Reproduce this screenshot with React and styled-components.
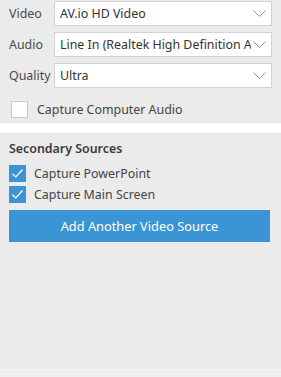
import styled, { createGlobalStyle } from 'styled-components';

const GlobalStyle = createGlobalStyle`
    html, body {
        margin: 0;
        padding: 0;
        background: #ebebeb;
    }
    body {
        font-family: "Noto Sans", "Open Sans", sans-serif;
        color: #444;
    }
`;

const Page = styled.div`
    width: 281px;
    height: 377px;
    display: flex;
    flex-direction: column;
    background: #ebebeb;
`;

const TopPanel = styled.div`
    padding: 1px 9px 0 9px;
    height: 123px;
    box-sizing: border-box;
    display: flex;
    flex-direction: column;
    gap: 6px;
`;

const Divider = styled.div`
    height: 10px;
    background: #ffffff;
`;

const Row = styled.div`
    display: flex;
    align-items: center;
`;

const Label = styled.div`
    width: 45px;
    font-size: 12.4px;
    color: #4a4a4a;
`;

const Select = styled.div`
    flex: 1;
    min-width: 0;
    height: 25px;
    box-sizing: border-box;
    background: #fff;
    border: 1px solid #d2d2d2;
    display: flex;
    align-items: center;
    padding: 0 0 0 5px;
    font-size: 12.4px;
    color: #333;
`;

const SelectText = styled.span`
    flex: 1;
    min-width: 0;
    white-space: nowrap;
    overflow: hidden;
`;

const Chevron = styled.svg`
    width: 13px;
    height: 7px;
    margin: 0 5px 0 2px;
    flex-shrink: 0;
`;

const CheckRow = styled.label`
    display: flex;
    align-items: center;
    gap: ${p => p.$gap || 8}px;
    font-size: 12.4px;
    color: #444;
    margin-top: ${p => p.$top || 0}px;
    padding-left: ${p => p.$indent || 0}px;
`;

const Box = styled.span`
    width: 17px;
    height: 17px;
    box-sizing: border-box;
    display: flex;
    align-items: center;
    justify-content: center;
    background: ${p => (p.$checked ? '#3b94d4' : '#fff')};
    border: 1px solid ${p => (p.$checked ? '#3b94d4' : '#c8c8c8')};
`;

const BottomPanel = styled.div`
    flex: 1;
    padding: 7px 11px 0 9px;
    display: flex;
    flex-direction: column;
`;

const Heading = styled.div`
    font-size: 12.4px;
    font-weight: 600;
    color: #3a3a3a;
`;

const CheckList = styled.div`
    display: flex;
    flex-direction: column;
    gap: 4px;
    margin-top: 8px;
`;

const Button = styled.button`
    margin-top: 7px;
    height: 32px;
    border: none;
    background: #3b94d4;
    color: #fff;
    font-family: inherit;
    font-size: 12.8px;
    cursor: pointer;
`;

const Footer = styled.div`
    height: 7px;
    background: #f0f0f0;
    border-top: 1px solid #f4f4f4;
`;

function Check({ checked }) {
    return (
        <Box $checked={checked}>
            {checked && (
                <svg width="13" height="11" viewBox="0 0 13 11">
                    <path d="M1.5 5.8 L4.8 9 L11.5 1.5" fill="none" stroke="#fff" strokeWidth="1.2" />
                </svg>
            )}
        </Box>
    );
}

function Dropdown({ label, value }) {
    return (
        <Row>
            <Label>{label}</Label>
            <Select>
                <SelectText>{value}</SelectText>
                <Chevron viewBox="0 0 13 7">
                    <path d="M0.5 0.5 L6.5 6.5 L12.5 0.5" fill="none" stroke="#999" strokeWidth="1" />
                </Chevron>
            </Select>
        </Row>
    );
}

export default function App() {
    return (
        <Page>
            <GlobalStyle />
            <TopPanel>
                <Dropdown label="Video" value="AV.io HD Video" />
                <Dropdown label="Audio" value="Line In (Realtek High Definition Audio)" />
                <Dropdown label="Quality" value="Ultra" />
                <CheckRow $top={7} $indent={2} $gap={9}>
                    <Check checked={false} />
                    Capture Computer Audio
                </CheckRow>
            </TopPanel>
            <Divider />
            <BottomPanel>
                <Heading>Secondary Sources</Heading>
                <CheckList>
                    <CheckRow>
                        <Check checked />
                        Capture PowerPoint
                    </CheckRow>
                    <CheckRow>
                        <Check checked />
                        Capture Main Screen
                    </CheckRow>
                </CheckList>
                <Button>Add Another Video Source</Button>
            </BottomPanel>
            <Footer />
        </Page>
    );
}
